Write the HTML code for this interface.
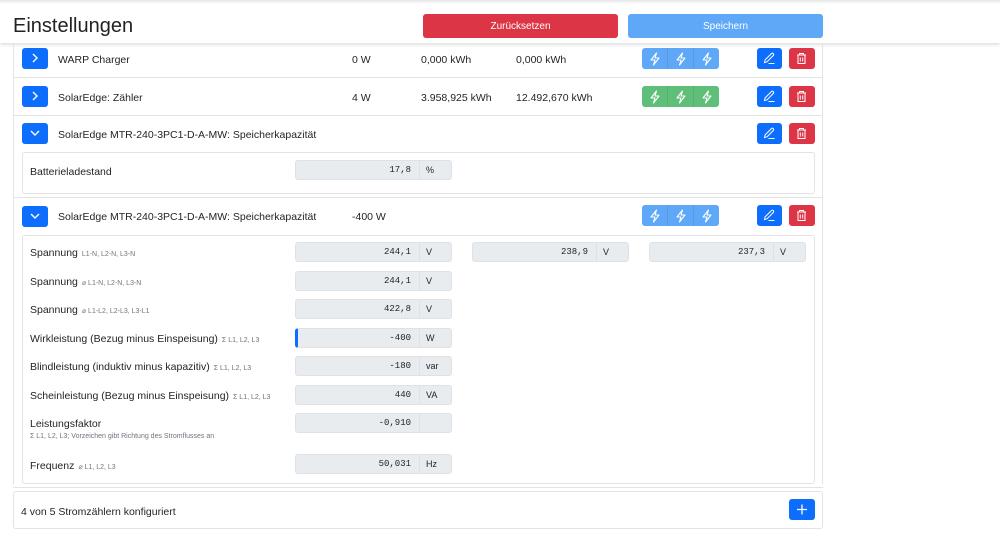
<!DOCTYPE html>
<html><head><meta charset="utf-8"><style>
*{box-sizing:border-box;margin:0;padding:0}
body{width:1000px;height:539px;background:#fff;font-family:"Liberation Sans","DejaVu Sans",sans-serif;font-size:10px;color:#212529;position:relative;overflow:hidden}
.a{position:absolute}
.hdr{left:0;top:0;width:1000px;height:43px;background:#fff;box-shadow:0 2px 3px rgba(0,0,0,.12)}
.hdr0{left:0;top:0;width:1000px;height:4px;background:linear-gradient(#e6e6e6,#fff)}
.btn{position:absolute;border-radius:3px;color:#fff;text-align:center}
.card{border:1px solid #e3e3e3;border-radius:3px}
.line{height:1px;background:#e3e3e3}
.exp{position:absolute;left:22px;width:26px;height:21px;background:#0d6efd;border-radius:3px}
.exp svg{position:absolute;left:8px;top:5px}
.t{position:absolute;font-size:10.5px;white-space:nowrap}
.bolt{position:absolute;width:77px;height:21px;border-radius:3px;display:flex}
.bolt div{flex:1;border-right:1px solid rgba(0,0,0,.08);display:flex;align-items:center;justify-content:center}
.bolt div:last-child{border:none}
.ed{position:absolute;left:757px;width:25px;height:21px;background:#0d6efd;border-radius:3px}
.dl{position:absolute;left:789px;width:26px;height:21px;background:#dc3545;border-radius:3px}
.ed svg,.dl svg{position:absolute;left:6px;top:4px}
.in{position:absolute;height:20px;width:157px;background:#e9ecef;border:1px solid #dee2e6;border-radius:3px}
.in .v{position:absolute;right:40px;top:4px;font-family:"Liberation Mono",monospace;font-size:9px}
.in .u{position:absolute;left:123px;top:0;height:18px;width:33px;border-left:1px solid #dee2e6;padding:4px 0 0 6px;font-size:9px}
.lab{position:absolute;left:30px;font-size:10.5px;white-space:nowrap}
.lab small{font-size:7px;color:#6c757d;margin-left:4px}
</style></head><body>
<div class="a hdr"></div><div class="a hdr0"></div>
<div class="t" style="left:13px;top:15px;font-size:20px;color:#222">Einstellungen</div>
<div class="btn" style="left:423px;top:14px;width:195px;height:24px;background:#dc3545;padding-top:7px;font-size:10px">Zurücksetzen</div>
<div class="btn" style="left:628px;top:14px;width:195px;height:24px;background:#5ea8f7;padding-top:7px;font-size:10px">Speichern</div>

<div class="a" style="left:13px;top:44px;width:810px;height:440px;border-left:1px solid #e3e3e3;border-right:1px solid #e3e3e3"></div>
<div class="a line" style="left:13px;top:77px;width:810px"></div>
<div class="a line" style="left:13px;top:115px;width:810px"></div>
<div class="a line" style="left:13px;top:197px;width:810px"></div>
<div class="a card" style="left:22px;top:152px;width:793px;height:42px"></div>
<div class="a card" style="left:22px;top:235px;width:793px;height:249px"></div>
<div class="a line" style="left:13px;top:487px;width:810px"></div>
<div class="a card" style="left:13px;top:491px;width:810px;height:38px"></div>

<div class="exp" style="top:48px"><svg width="10" height="10"><path d="M3 1l4 4-4 4" fill="none" stroke="#fff" stroke-width="1.4"/></svg></div>
<div class="t" style="left:58px;top:54px">WARP Charger</div>
<div class="t" style="left:352px;top:54px">0 W</div>
<div class="t" style="left:421px;top:54px">0,000 kWh</div>
<div class="t" style="left:516px;top:54px">0,000 kWh</div>

<div class="exp" style="top:86px"><svg width="10" height="10"><path d="M3 1l4 4-4 4" fill="none" stroke="#fff" stroke-width="1.4"/></svg></div>
<div class="t" style="left:58px;top:92px">SolarEdge: Zähler</div>
<div class="t" style="left:352px;top:92px">4 W</div>
<div class="t" style="left:421px;top:92px">3.958,925 kWh</div>
<div class="t" style="left:516px;top:92px">12.492,670 kWh</div>

<div class="exp" style="top:123px"><svg width="10" height="10"><path d="M1 3l4 4 4-4" fill="none" stroke="#fff" stroke-width="1.4"/></svg></div>
<div class="t" style="left:58px;top:129px">SolarEdge MTR-240-3PC1-D-A-MW: Speicherkapazität</div>

<div class="exp" style="top:206px"><svg width="10" height="10"><path d="M1 3l4 4 4-4" fill="none" stroke="#fff" stroke-width="1.4"/></svg></div>
<div class="t" style="left:58px;top:211px">SolarEdge MTR-240-3PC1-D-A-MW: Speicherkapazität</div>
<div class="t" style="left:352px;top:211px">-400 W</div>

<svg width="0" height="0" style="position:absolute"><defs><symbol id="b" viewBox="0 0 12 14"><path d="M7.5 1L2 8h4l-1.5 5L10 6H6z" fill="none" stroke="#fff" stroke-width="1.1" stroke-linejoin="round"/></symbol></defs></svg>
<div class="bolt" style="left:642px;top:48px;background:#5ea8f7"><div><svg width="12" height="14"><use href="#b"/></svg></div><div><svg width="12" height="14"><use href="#b"/></svg></div><div><svg width="12" height="14"><use href="#b"/></svg></div></div>
<div class="bolt" style="left:642px;top:86px;background:#5fbf78"><div><svg width="12" height="14"><use href="#b"/></svg></div><div><svg width="12" height="14"><use href="#b"/></svg></div><div><svg width="12" height="14"><use href="#b"/></svg></div></div>
<div class="bolt" style="left:642px;top:205px;background:#5ea8f7"><div><svg width="12" height="14"><use href="#b"/></svg></div><div><svg width="12" height="14"><use href="#b"/></svg></div><div><svg width="12" height="14"><use href="#b"/></svg></div></div>

<svg width="0" height="0" style="position:absolute"><defs>
<symbol id="e" viewBox="0 0 13 13"><path d="M1.5 10.5l.6-2.6 6.3-6.3a1.3 1.3 0 0 1 1.9 1.9L4 9.8zM5.5 11.5h6" fill="none" stroke="#fff" stroke-width="1"/></symbol>
<symbol id="d" viewBox="0 0 13 13"><path d="M2 3h9M4.5 3V1.5h4V3M3 3.5v8h7v-8M5.3 5.5v4M7.7 5.5v4" fill="none" stroke="#fff" stroke-width="1"/></symbol></defs></svg>
<div class="ed" style="top:48px"><svg width="13" height="13"><use href="#e"/></svg></div>
<div class="dl" style="top:48px"><svg width="13" height="13"><use href="#d"/></svg></div>
<div class="ed" style="top:86px"><svg width="13" height="13"><use href="#e"/></svg></div>
<div class="dl" style="top:86px"><svg width="13" height="13"><use href="#d"/></svg></div>
<div class="ed" style="top:123px"><svg width="13" height="13"><use href="#e"/></svg></div>
<div class="dl" style="top:123px"><svg width="13" height="13"><use href="#d"/></svg></div>
<div class="ed" style="top:205px"><svg width="13" height="13"><use href="#e"/></svg></div>
<div class="dl" style="top:205px"><svg width="13" height="13"><use href="#d"/></svg></div>

<div class="lab" style="top:166px">Batterieladestand</div>
<div class="in" style="left:295px;top:160px"><span class="v">17,8</span><span class="u">%</span></div>

<div class="lab" style="top:247px">Spannung<small>L1-N, L2-N, L3-N</small></div>
<div class="in" style="left:295px;top:242px"><span class="v">244,1</span><span class="u">V</span></div>
<div class="in" style="left:472px;top:242px"><span class="v">238,9</span><span class="u">V</span></div>
<div class="in" style="left:649px;top:242px"><span class="v">237,3</span><span class="u">V</span></div>

<div class="lab" style="top:276px">Spannung<small>⌀ L1-N, L2-N, L3-N</small></div>
<div class="in" style="left:295px;top:271px"><span class="v">244,1</span><span class="u">V</span></div>
<div class="lab" style="top:304px">Spannung<small>⌀ L1-L2, L2-L3, L3-L1</small></div>
<div class="in" style="left:295px;top:299px"><span class="v">422,8</span><span class="u">V</span></div>
<div class="lab" style="top:333px">Wirkleistung (Bezug minus Einspeisung)<small>Σ L1, L2, L3</small></div>
<div class="in" style="left:295px;top:328px;border-left:3px solid #0d6efd"><span class="v">-400</span><span class="u" style="left:121px">W</span></div>
<div class="lab" style="top:361px">Blindleistung (induktiv minus kapazitiv)<small>Σ L1, L2, L3</small></div>
<div class="in" style="left:295px;top:356px"><span class="v">-180</span><span class="u">var</span></div>
<div class="lab" style="top:390px">Scheinleistung (Bezug minus Einspeisung)<small>Σ L1, L2, L3</small></div>
<div class="in" style="left:295px;top:385px"><span class="v">440</span><span class="u">VA</span></div>
<div class="lab" style="top:418px">Leistungsfaktor</div>
<div class="lab" style="top:433px;font-size:7px;color:#6c757d">Σ L1, L2, L3; Vorzeichen gibt Richtung des Stromflusses an</div>
<div class="in" style="left:295px;top:413px"><span class="v">-0,910</span><span class="u"></span></div>
<div class="lab" style="top:460px">Frequenz<small>⌀ L1, L2, L3</small></div>
<div class="in" style="left:295px;top:454px"><span class="v">50,031</span><span class="u">Hz</span></div>

<div class="t" style="left:21px;top:506px">4 von 5 Stromzählern konfiguriert</div>
<div class="btn" style="left:789px;top:499px;width:26px;height:21px;background:#0d6efd"><svg width="26" height="21"><path d="M13 5.5v10M8 10.5h10" stroke="#fff" stroke-width="1.3"/></svg></div>
</body></html>
